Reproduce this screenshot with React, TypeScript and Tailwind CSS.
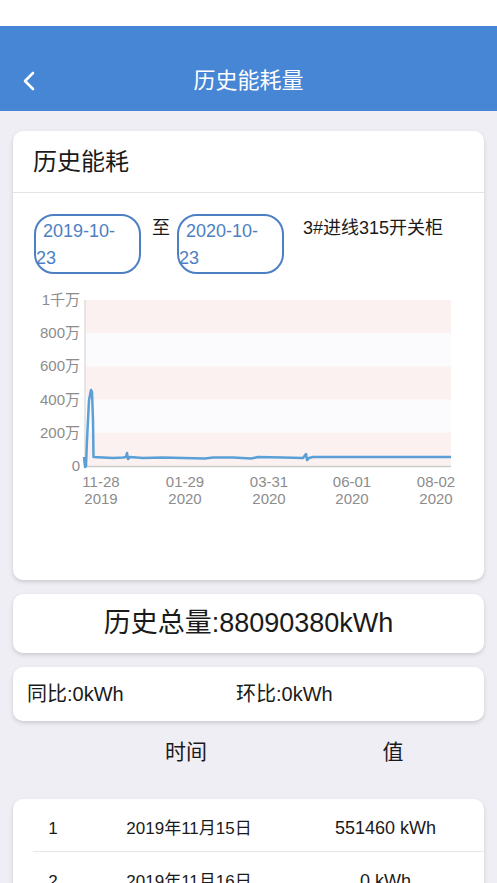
import React from "react";

// ----------------------
// Data
// ----------------------
const yTicks = [
  { label: "1千万", y: 16 },
  { label: "800万", y: 49.2 },
  { label: "600万", y: 82.4 },
  { label: "400万", y: 115.6 },
  { label: "200万", y: 148.8 },
  { label: "0", y: 182 },
];

const xTicks = [
  { top: "11-28", bottom: "2019", x: 88 },
  { top: "01-29", bottom: "2020", x: 172 },
  { top: "03-31", bottom: "2020", x: 256 },
  { top: "06-01", bottom: "2020", x: 339 },
  { top: "08-02", bottom: "2020", x: 423 },
];

const linePoints =
  "71,173 72,183 73,182 74,156 76,116 78,106 79,108 80,136 80.5,173 90,173.5 100,174 110,173.5 113,173 114,169 115,175 117,173 130,174 150,173.5 170,174 192,174.5 200,173.5 220,173.5 238,174.5 245,173 270,173.5 290,174 293,170 294,176 296,174 300,173 340,173 380,173 438,173";

const rows = [
  { id: 1, date: "2019年11月15日", value: "551460 kWh" },
  { id: 2, date: "2019年11月16日", value: "0 kWh" },
  { id: 3, date: "2019年11月17日", value: "0 kWh" },
];

const font = { fontFamily: '"Liberation Sans", "Noto Sans CJK SC", sans-serif' };

// ----------------------
// Components
// ----------------------
const DatePill = ({ head, tail }: { head: string; tail: string }) => (
  <div className="w-[107px] h-[60px] border-2 border-[#4d80c2] rounded-[20px] text-[18px] leading-[27px] text-[#4d80c2] pt-[2px] shrink-0">
    <div className="pl-[7px]">{head}</div>
    <div>{tail}</div>
  </div>
);

const HistoryChart = () => (
  <svg width="471" height="296" viewBox="0 0 471 296" className="block mt-[10px]">
    {/* bands */}
    <rect x="73" y="16" width="365" height="33.2" fill="#fcf1f1" />
    <rect x="73" y="49.2" width="365" height="33.2" fill="#fbfafc" />
    <rect x="73" y="82.4" width="365" height="33.2" fill="#fcf1f1" />
    <rect x="73" y="115.6" width="365" height="33.2" fill="#fbfafc" />
    <rect x="73" y="148.8" width="365" height="33.2" fill="#fcf1f1" />
    {/* axes */}
    <line x1="72" y1="16" x2="72" y2="182" stroke="#cccccc" strokeWidth="1" />
    <line x1="72" y1="182.5" x2="438" y2="182.5" stroke="#cccccc" strokeWidth="1.5" />
    {yTicks.map((t) => (
      <text key={t.label} x="67" y={t.y + 5} textAnchor="end" fontSize="15" fill="#8c8c8c" style={font}>
        {t.label}
      </text>
    ))}
    {xTicks.map((t) => (
      <g key={t.x}>
        <text x={t.x} y="203" textAnchor="middle" fontSize="15" fill="#8c8c8c" style={font}>
          {t.top}
        </text>
        <text x={t.x} y="220" textAnchor="middle" fontSize="15" fill="#8c8c8c" style={font}>
          {t.bottom}
        </text>
      </g>
    ))}
    <polyline points={linePoints} fill="none" stroke="#5aa0d6" strokeWidth="2.5" strokeLinejoin="round" />
  </svg>
);

// ----------------------
// App
// ----------------------
export default function App() {
  return (
    <div className="min-h-screen bg-[#efeef4] text-[#1a1a1a]" style={font}>
      {/* status bar */}
      <div className="h-[26px] bg-white" />

      {/* Header */}
      <header className="h-[85px] bg-[#4785d5] grid grid-cols-[60px_1fr_60px] items-end pb-[16px]">
        <div className="pl-[22px] pb-[4px]">
          <svg width="14" height="20" viewBox="0 0 14 20">
            <path d="M11 2 L3 10 L11 18" fill="none" stroke="white" strokeWidth="2.6" strokeLinecap="round" strokeLinejoin="round" />
          </svg>
        </div>
        <h1 className="text-white text-[22px] leading-[28px] text-center">历史能耗量</h1>
        <div />
      </header>

      <main className="px-[13px]">
        {/* History card */}
        <section className="mt-[20px] bg-white rounded-[10px] shadow-[0_2px_4px_rgba(0,0,0,0.15)] overflow-hidden">
          <div className="h-[62px] flex items-center pl-[20px] border-b border-[#e3e3e6] text-[24px]">历史能耗</div>
          <div className="pt-[21px] flex items-start pl-[21px]">
            <DatePill head="2019-10-" tail="23" />
            <span className="ml-[11px] mt-[3px] text-[18px] leading-[22px]">至</span>
            <div className="ml-[7px]">
              <DatePill head="2020-10-" tail="23" />
            </div>
            <span className="ml-[19px] mt-[3px] text-[18px] leading-[22px]">3#进线315开关柜</span>
          </div>
          <HistoryChart />
        </section>

        {/* Total */}
        <section className="mt-[14px] h-[59px] bg-white rounded-[10px] shadow-[0_2px_4px_rgba(0,0,0,0.15)] flex items-center justify-center text-[27px]">
          历史总量:88090380kWh
        </section>

        {/* Compare */}
        <section className="mt-[14px] h-[54px] bg-white rounded-[10px] shadow-[0_2px_4px_rgba(0,0,0,0.15)] flex items-center text-[20px]">
          <span className="pl-[14px] w-[223px]">同比:0kWh</span>
          <span>环比:0kWh</span>
        </section>

        {/* Table header */}
        <div className="h-[78px] pt-[17px] grid grid-cols-[80px_186px_1fr] text-[21px] leading-[28px]">
          <div />
          <div className="text-center">时间</div>
          <div className="text-center pl-[23px]">值</div>
        </div>

        {/* Table */}
        <section className="bg-white rounded-[10px] shadow-[0_2px_4px_rgba(0,0,0,0.15)] overflow-hidden text-[17px]">
          {rows.map((r) => (
            <div key={r.id} className="h-[53px] pt-[7px] grid grid-cols-[40px_232px_1fr] items-center border-b border-[#e6e6e8] ml-[20px]">
              <div className="text-center">{r.id}</div>
              <div className="text-center">{r.date}</div>
              <div className="text-center text-[18px] pr-[18px]">{r.value}</div>
            </div>
          ))}
        </section>
      </main>
    </div>
  );
}
